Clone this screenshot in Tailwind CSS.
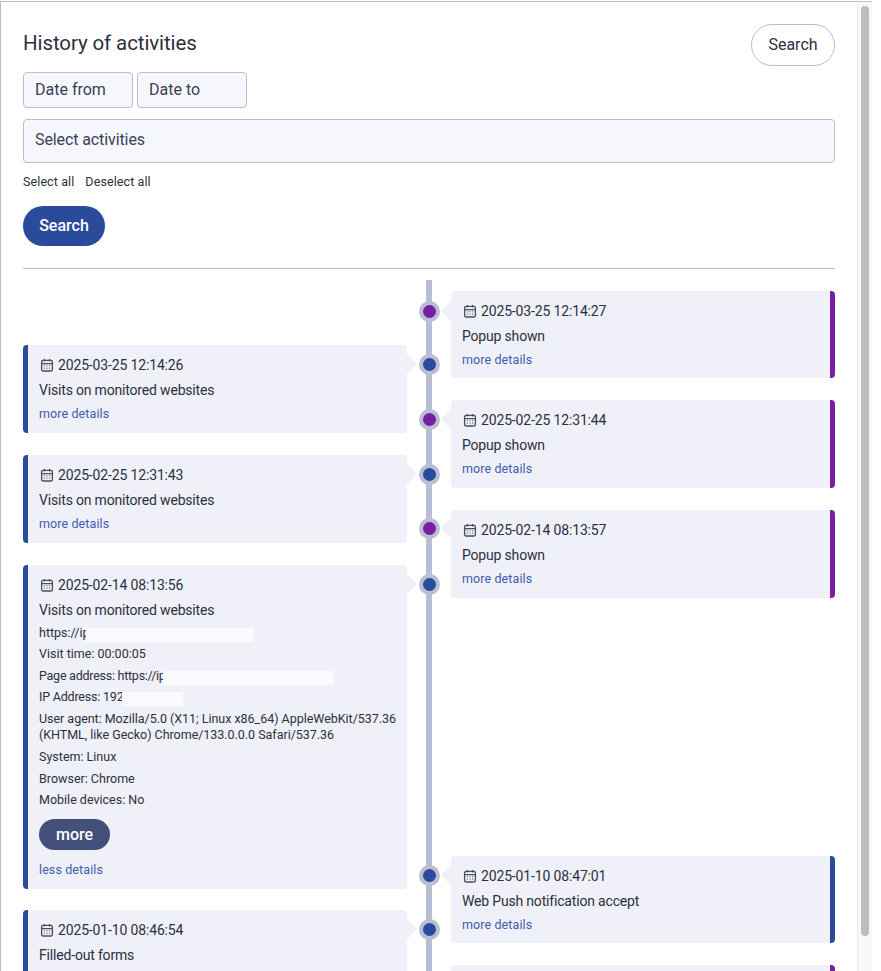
<!DOCTYPE html>
<html lang="en">
<head>
    <meta charset="UTF-8">
    <title>History of activities</title>
    <meta name="viewport" content="width=device-width, initial-scale=1.0">
    <script src="https://cdn.jsdelivr.net/npm/@tailwindcss/browser@4"></script>
</head>
<body class="bg-white">
<div class="flex w-[881px] h-[971px] overflow-hidden font-['Roboto',sans-serif] text-[#2c3040]">
    <div class="w-[872px] shrink-0 flex flex-col">
        <div class="h-px mt-px shrink-0 bg-[#b9bed3]"></div>
        <div class="flex flex-1 min-h-0">
            <main class="w-[857px] shrink-0 border-l border-[#b9bed3] pl-[22px] pr-[22px] overflow-hidden">
                <div class="flex justify-between items-start pt-[22px] h-[70px]">
                    <h1 class="text-[20.5px] leading-[38px] tracking-[-0.1px]">History of activities</h1>
                    <button type="button" class="w-[84px] h-[42px] rounded-full border border-[#b9bed3] text-[16px]">Search</button>
                </div>
                <div class="flex gap-1">
                    <div class="w-[110px] h-9 rounded-sm border border-[#b9bed3] bg-[#f6f7fd] px-[11px] text-[16px] leading-[33px] text-[#3a3f55]">Date from</div>
                    <div class="w-[110px] h-9 rounded-sm border border-[#b9bed3] bg-[#f6f7fd] px-[11px] text-[16px] leading-[33px] text-[#3a3f55]">Date to</div>
                </div>
                <div class="mt-[11px] h-11 rounded-sm border border-[#b9bed3] bg-[#f6f7fd] px-[11px] text-[16px] leading-[40px] tracking-[-0.1px] text-[#3a3f55]">Select activities</div>
                <div class="flex gap-[11px] mt-[11px] text-[12.5px] leading-[16px] tracking-[0.1px]">
                    <span>Select all</span>
                    <span>Deselect all</span>
                </div>
                <button type="button" class="block mt-4 w-[82px] h-10 rounded-full bg-[#2a4a9b] text-white text-[16px] font-medium">Search</button>
                <hr class="mt-[22px] border-[#b9bed3]">

                <div class="relative mt-[11px] grid grid-cols-2 gap-x-11">
                    <div class="absolute left-[403px] top-0 w-1.5 h-[700px] bg-[#b9bed3]"></div>
                    <div id="left_col" class="relative pt-[65px] flex flex-col"></div>
                    <div id="right_col" class="relative pt-[11px] flex flex-col"></div>
                </div>
            </main>
            <div class="w-[15px] shrink-0 border-l border-[#e8e8e8] bg-[#f8f8f8] pl-[3px] pt-1">
                <div class="w-2 h-[930px] rounded-full bg-[#bdbdbd]"></div>
            </div>
        </div>
    </div>
</div>

<script>
    const calendar = `<svg class="w-3.5 h-3.5 shrink-0" viewBox="0 0 14 14" fill="none" stroke="#4a4d5c" stroke-width="1.3" aria-hidden="true"><rect x="1.6" y="2.4" width="10.8" height="10.6" rx="1.4"/><path d="M1.6 5.6h10.8M4.4 1v2.4M9.6 1v2.4"/><path d="M3.8 7.8h1M6.5 7.8h1M9.2 7.8h1M3.8 10.2h1M6.5 10.2h1M9.2 10.2h1" stroke-width="1"/></svg>`

    function open_details(){
        return `
            <div class="text-[12.5px] mt-[2px]">
                <p class="flex h-[21.5px] items-center"><span class="w-[47px] whitespace-nowrap">https://ip</span><span class="relative w-[168px] h-3.5 mt-[3px] bg-[#fbfbfd]"></span></p>
                <p class="flex h-[21.5px] items-center">Visit time: 00:00:05</p>
                <p class="flex h-[21.5px] items-center"><span class="w-[124px] whitespace-nowrap tracking-[-0.25px]">Page address: https://ip</span><span class="relative w-[171px] h-3.5 mt-[3px] bg-[#fbfbfd]"></span></p>
                <p class="flex h-[21.5px] items-center"><span class="w-[83px] whitespace-nowrap tracking-[-0.2px]">IP Address: 192</span><span class="relative w-[61px] h-3.5 mt-[3px] bg-[#fbfbfd]"></span></p>
                <p class="mt-[2.25px] mb-[4.25px] leading-[16px] tracking-[-0.03px]">User agent: Mozilla/5.0 (X11; Linux x86_64) AppleWebKit/537.36 (KHTML, like Gecko) Chrome/133.0.0.0 Safari/537.36</p>
                <p class="flex h-[21.5px] items-center">System: Linux</p>
                <p class="flex h-[21.5px] items-center">Browser: Chrome</p>
                <p class="flex h-[21.5px] items-center">Mobile devices: No</p>
            </div>
            <button type="button" class="block mt-[7.5px] w-[71px] h-[31px] rounded-full bg-[#44507a] text-white text-[16px] font-medium">more</button>`
    }

    function render_card(item, side){
        const is_left = side === 'left'
        const edge = item.color === 'purple' ? 'border-[#7b1fa2]' : 'border-[#2a4a9b]'
        const dot = item.color === 'purple' ? 'bg-[#7b1fa2]' : 'bg-[#2a4a9b]'
        const card_side = is_left ? `border-l-[5px] pl-[11px] pr-2 ${edge}` : `border-r-[5px] pl-[11px] pr-2 ${edge}`
        const arrow = is_left
            ? 'left-full border-l-[10px] border-l-[#eff0f8]'
            : 'right-full border-r-[10px] border-r-[#eff0f8]'
        const knob = is_left ? 'left-[calc(100%+11.5px)]' : 'right-[calc(100%+11.5px)]'
        const center = item.dot || 19
        const body = item.stub ? '' : `
                <div class="flex items-center gap-1 text-[14px] leading-[22px] tracking-[-0.15px] pl-px">${calendar}<span>${item.date}</span></div>
                <div class="mt-[2.5px] text-[14px] leading-[22px] tracking-[-0.18px]">${item.name}</div>`
        const link = item.stub || item.nolink ? '' : `
                ${item.open ? open_details() : ''}
                <a href="#" class="block ${item.open ? 'mt-[9.5px]' : 'mt-[3px]'} text-[12.5px] leading-[20px] tracking-[0.1px] text-[#3f5cab]">${item.open ? 'less details' : 'more details'}</a>`
        return `
            <article class="relative shrink-0 rounded-sm bg-[#eff0f8] ${card_side} pt-[9px]" style="margin-top:${item.gap || 0}px;height:${item.h}px">
                <div class="absolute ${arrow} border-y-[10px] border-y-transparent" style="top:${center - 10}px"></div>
                <div class="absolute ${knob} w-[21px] h-[21px] rounded-full border-[4.5px] border-[#b9bed3] ${dot}" style="top:${center - 10.5}px"></div>
                ${body}
                ${link}
            </article>`
    }

    const left_items = [
        {date: '2025-03-25 12:14:26', name: 'Visits on monitored websites', color: 'blue', h: 88},
        {date: '2025-02-25 12:31:43', name: 'Visits on monitored websites', color: 'blue', h: 88, gap: 22},
        {date: '2025-02-14 08:13:56', name: 'Visits on monitored websites', color: 'blue', h: 324, gap: 22, open: true},
        {date: '2025-01-10 08:46:54', name: 'Filled-out forms', color: 'blue', h: 88, gap: 21, nolink: true},
    ]
    const right_items = [
        {date: '2025-03-25 12:14:27', name: 'Popup shown', color: 'purple', h: 87, dot: 20},
        {date: '2025-02-25 12:31:44', name: 'Popup shown', color: 'purple', h: 88, gap: 22},
        {date: '2025-02-14 08:13:57', name: 'Popup shown', color: 'purple', h: 88, gap: 22, dot: 18},
        {date: '2025-01-10 08:47:01', name: 'Web Push notification accept', color: 'blue', h: 87, gap: 258},
        {color: 'purple', h: 88, gap: 22, stub: true},
    ]
    document.querySelector('#left_col').innerHTML = left_items.map(i => render_card(i, 'left')).join('')
    document.querySelector('#right_col').innerHTML = right_items.map(i => render_card(i, 'right')).join('')
</script>
</body>
</html>
